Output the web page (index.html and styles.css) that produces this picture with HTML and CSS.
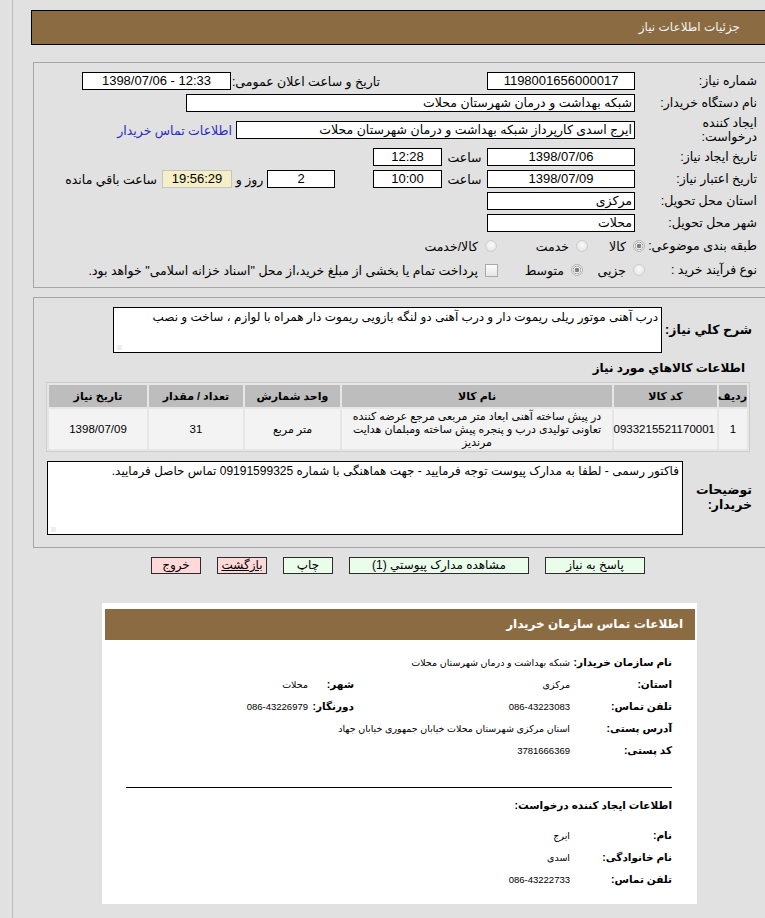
FILE: index.html
```html
<!DOCTYPE html>
<html lang="fa">
<head>
<meta charset="utf-8">
<title>جزئیات اطلاعات نیاز</title>
<link rel="stylesheet" href="styles.css">
</head>
<body>
<div class="frame">
  <div class="main">
    <div class="titlebar">جزئیات اطلاعات نیاز</div>

    <div class="panel panel-info">
      <div class="row">
        <div class="lbl">شماره نیاز:</div>
        <div class="box w148 center num">1198001656000017</div>
        <div class="lbl2">تاریخ و ساعت اعلان عمومی:</div>
        <div class="box w149 center ltr num">1398/07/06 - 12:33</div>
      </div>
      <div class="row">
        <div class="lbl">نام دستگاه خریدار:</div>
        <div class="box w449">شبکه بهداشت و درمان شهرستان محلات</div>
      </div>
      <div class="row row-tall">
        <div class="lbl">ایجاد کننده<br>درخواست:</div>
        <div class="box w399">ایرج اسدی کارپرداز شبکه بهداشت و درمان شهرستان محلات</div>
        <a class="link" href="#">اطلاعات تماس خریدار</a>
      </div>
      <div class="row">
        <div class="lbl">تاریخ ایجاد نیاز:</div>
        <div class="box w148 center num">1398/07/06</div>
        <div class="unit">ساعت</div>
        <div class="box w69 center num">12:28</div>
      </div>
      <div class="row">
        <div class="lbl">تاریخ اعتبار نیاز:</div>
        <div class="box w148 center num">1398/07/09</div>
        <div class="unit">ساعت</div>
        <div class="box w69 center num">10:00</div>
        <div class="box w68 center days num">2</div>
        <div class="unit-sm">روز و</div>
        <div class="box w70 center remain num">19:56:29</div>
        <div class="after">ساعت باقي مانده</div>
      </div>
      <div class="row">
        <div class="lbl">استان محل تحویل:</div>
        <div class="box w148">مرکزی</div>
      </div>
      <div class="row">
        <div class="lbl">شهر محل تحویل:</div>
        <div class="box w148">محلات</div>
      </div>
      <div class="row row-opt">
        <div class="lbl lbl-opt">طبقه بندی موضوعی:</div>
        <div class="opt o57"><span class="radio on"></span><span>کالا</span></div>
        <div class="opt o91"><span class="radio"></span><span>خدمت</span></div>
        <div class="opt"><span class="radio"></span><span>کالا/خدمت</span></div>
      </div>
      <div class="row row-opt">
        <div class="lbl lbl-opt">نوع فرآیند خرید :</div>
        <div class="opt o62"><span class="radio"></span><span>جزیی</span></div>
        <div class="opt o85"><span class="radio on"></span><span>متوسط</span></div>
        <div class="opt"><span class="check"></span><span>پرداخت تمام یا بخشی از مبلغ خرید،از محل "اسناد خزانه اسلامی" خواهد بود.</span></div>
      </div>
    </div>

    <div class="panel panel-desc">
      <div class="desc-row">
        <div class="blbl">شرح کلي نیاز:</div>
        <div class="area area-desc">درب آهنی موتور ریلی ریموت دار و درب آهنی دو لنگه بازویی ریموت دار همراه با لوازم ، ساخت و نصب</div>
      </div>
      <div class="heading">اطلاعات کالاهاي مورد نیاز</div>
      <table class="goods">
        <thead>
          <tr>
            <th class="c-row">ردیف</th>
            <th class="c-code">کد کالا</th>
            <th class="c-name">نام کالا</th>
            <th class="c-unit">واحد شمارش</th>
            <th class="c-qty">تعداد / مقدار</th>
            <th class="c-date">تاریخ نیاز</th>
          </tr>
        </thead>
        <tbody>
          <tr>
            <td>1</td>
            <td>0933215521170001</td>
            <td class="name">در پیش ساخته آهنی ابعاد متر مربعی مرجع عرضه کننده تعاونی تولیدی درب و پنجره پیش ساخته ومبلمان هدایت مرندیز</td>
            <td class="small">متر مربع</td>
            <td>31</td>
            <td>1398/07/09</td>
          </tr>
        </tbody>
      </table>
      <div class="notes-row">
        <div class="blbl blbl-notes">توضیحات<br>خریدار:</div>
        <div class="area area-notes">فاکتور رسمی - لطفا به مدارک پیوست توجه فرمایید - جهت هماهنگی با شماره 09191599325 تماس حاصل فرمایید.</div>
      </div>
    </div>

    <div class="buttons">
      <span class="btn btn-go w100">پاسخ به نیاز</span>
      <span class="btn btn-go w180">مشاهده مدارک پیوستي (1)</span>
      <span class="btn btn-go w50">چاپ</span>
      <span class="btn btn-stop w50 under">بازگشت</span>
      <span class="btn btn-stop w50">خروج</span>
    </div>

    <div class="card">
      <div class="card-bar">اطلاعات تماس سازمان خریدار</div>
      <div class="card-body">
        <div class="grid">
          <div class="k">نام سازمان خریدار:</div>
          <div class="v span3">شبکه بهداشت و درمان شهرستان محلات</div>
          <div class="k">استان:</div>
          <div class="v">مرکزی</div>
          <div class="k">شهر:</div>
          <div class="v">محلات</div>
          <div class="k">تلفن تماس:</div>
          <div class="v">086-43223083</div>
          <div class="k">دورنگار:</div>
          <div class="v">086-43226979</div>
          <div class="k">آدرس پستی:</div>
          <div class="v span3">استان مرکزی شهرستان محلات خیابان جمهوری خیابان جهاد</div>
          <div class="k">کد پستی:</div>
          <div class="v span3">3781666369</div>
        </div>
        <div class="rule"></div>
        <div class="sub">اطلاعات ایجاد کننده درخواست:</div>
        <div class="grid grid2">
          <div class="k">نام:</div>
          <div class="v">ایرج</div>
          <div class="k">نام خانوادگی:</div>
          <div class="v">اسدی</div>
          <div class="k">تلفن تماس:</div>
          <div class="v">086-43222733</div>
        </div>
      </div>
    </div>
  </div>
</div>
</body>
</html>
```

FILE: styles.css
```css
* { box-sizing: border-box; }
html, body { margin: 0; padding: 0; }
body {
  background: #e1e1e1;
  font-family: "Liberation Sans", "DejaVu Sans", sans-serif;
  font-size: 12.5px;
  color: #000;
  overflow-x: hidden;
}
.frame {
  margin-left: 12px;
  border-left: 1px solid #bdbdbd;
  padding-left: 18px;
  padding-top: 10px;
  min-height: 100vh;
}
.main { width: 740px; }

.titlebar {
  height: 35px;
  border: 1px solid #000;
  background: #8b6c42;
  color: #f3f3f3;
  direction: rtl;
  padding-right: 30px;
  line-height: 33px;
  font-size: 12px;
}

.panel {
  margin-left: 2px;
  border: 1px solid #a6a6a6;
  direction: rtl;
  padding-right: 13px;
}
.panel-info { margin-top: 17px; padding-top: 7px; padding-bottom: 5px; }

.row { display: flex; align-items: center; height: 22px; }
.row-tall { height: 32px; }
.row-opt { height: 24px; }
.lbl { width: 122px; line-height: 14px; flex: none; white-space: nowrap; }
.lbl-opt { width: 112px; }
.lbl2 { width: 149px; margin-right: 107px; flex: none; white-space: nowrap; }

.box {
  height: 18px;
  border: 1px solid #000;
  background: #fff;
  line-height: 16px;
  padding: 0 2px;
  white-space: nowrap;
  overflow: hidden;
  flex: none;
}
.num { font-size: 13px; }
.center { text-align: center; }
.ltr { direction: ltr; }
.w148 { width: 148px; }
.w149 { width: 149px; }
.w449 { width: 449px; }
.w399 { width: 399px; }
.w69 { width: 69px; }
.w68 { width: 68px; }
.w70 { width: 70px; }
.days { margin-right: 38px; }
.remain { background: #f4efc4; border-color: #c4c4c4; }
.unit { width: 45px; text-align: center; flex: none; }
.unit-sm { width: 35px; text-align: center; flex: none; }
.after { margin-right: 5px; white-space: nowrap; }
.link { color: #2a2ac8; text-decoration: none; margin-right: 4px; white-space: nowrap; }

.opt { display: flex; align-items: center; gap: 7px; flex: none; white-space: nowrap; }
.o57 { width: 57px; }
.o91 { width: 91px; }
.o62 { width: 62px; }
.o85 { width: 85px; }
.radio {
  width: 12px; height: 12px; border-radius: 50%;
  border: 1px solid #cdcdcd;
  background: radial-gradient(circle at 50% 40%, #fbfbfb, #e0e0e0);
  flex: none;
}
.radio.on {
  border-color: #b4b4b4;
  background: radial-gradient(circle, #7d7d7d 0 2px, #f2f2f2 2.6px 3.2px, #9c9c9c 3.8px, #ececec 4.4px);
}
.check {
  width: 13px; height: 13px;
  border: 1px solid #a9a9a9;
  background: linear-gradient(#fdfdfd, #e6e6e6);
  flex: none;
}

.panel-desc { margin-top: 9px; padding-top: 9px; padding-bottom: 12px; }
.desc-row { display: flex; align-items: center; }
.blbl { width: 95px; padding-right: 5px; font-weight: bold; font-size: 12.5px; line-height: 15px; flex: none; }
.blbl-notes { width: 74px; }
.area {
  position: relative;
  border: 1px solid #000;
  background: #fff;
  padding: 2px 3px;
  line-height: 15px;
  font-size: 12px;
}
.area::after {
  content: "";
  position: absolute;
  left: 3px; bottom: 2px;
  width: 5px; height: 5px;
  background: radial-gradient(circle, #c9c9c9 0.5px, transparent 0.8px) 0 0 / 2px 2px;
}
.area-desc { width: 549px; height: 46px; }
.heading { margin-top: 7px; padding-right: 12px; font-weight: bold; font-size: 12px; line-height: 16px; }

.goods {
  margin-top: 6px;
  margin-right: 7px;
  width: 703px;
  border: 1px solid #cdcdcd;
  border-spacing: 2px;
  background: #e6e6e6;
  font-size: 11px;
  table-layout: fixed;
}
.goods th {
  background: #bdbdbd;
  height: 22px;
  font-weight: bold;
  font-size: 11px;
  padding: 0;
}
.goods td {
  background: #f3f3f3;
  height: 40px;
  text-align: center;
  padding: 0 2px;
  line-height: 13px;
  font-size: 11.5px;
}
.goods td.name { font-size: 11px; }
.goods td.small { font-size: 11px; }
.c-row { width: 28px; }
.c-code { width: 103px; }
.c-name { width: 270px; }
.c-unit { width: 95px; }
.c-qty { width: 94px; }
.c-date { width: 98px; }

.notes-row { display: flex; align-items: center; margin-top: 9px; }
.area-notes { width: 636px; height: 74px; }

.buttons {
  direction: rtl;
  display: flex;
  gap: 16px;
  margin-top: 9px;
  padding-right: 126px;
}
.btn {
  height: 17px;
  border: 1px solid #2c2c2c;
  text-align: center;
  line-height: 15px;
  font-size: 12px;
  flex: none;
}
.btn-go { background: #eafdea; }
.btn-stop { background: #ffd9d9; }
.under { text-decoration: underline; }
.w100 { width: 100px; }
.w180 { width: 180px; }
.w50 { width: 50px; }

.card {
  margin-top: 29px;
  margin-left: 71px;
  width: 595px;
  background: #fff;
  padding: 6px 2px 14px 3px;
  direction: rtl;
}
.card-bar {
  height: 31px;
  background: #8b6c42;
  color: #fff;
  font-weight: bold;
  font-size: 12px;
  line-height: 31px;
  padding-right: 12px;
}
.card-body { padding: 11px 23px 0 21px; }
.grid {
  display: grid;
  grid-template-columns: 102px 216px 46px 1fr;
  grid-auto-rows: 22px;
  align-items: center;
}
.grid2 { margin-top: 11px; grid-template-columns: 102px 1fr; }
.k { font-weight: bold; font-size: 10.5px; white-space: nowrap; }
.v { font-size: 9.5px; white-space: nowrap; }
.span3 { grid-column: span 3; }
.rule { margin-top: 26px; height: 1px; background: #000; }
.sub { margin-top: 9px; font-weight: bold; font-size: 10.5px; line-height: 16px; }
```
